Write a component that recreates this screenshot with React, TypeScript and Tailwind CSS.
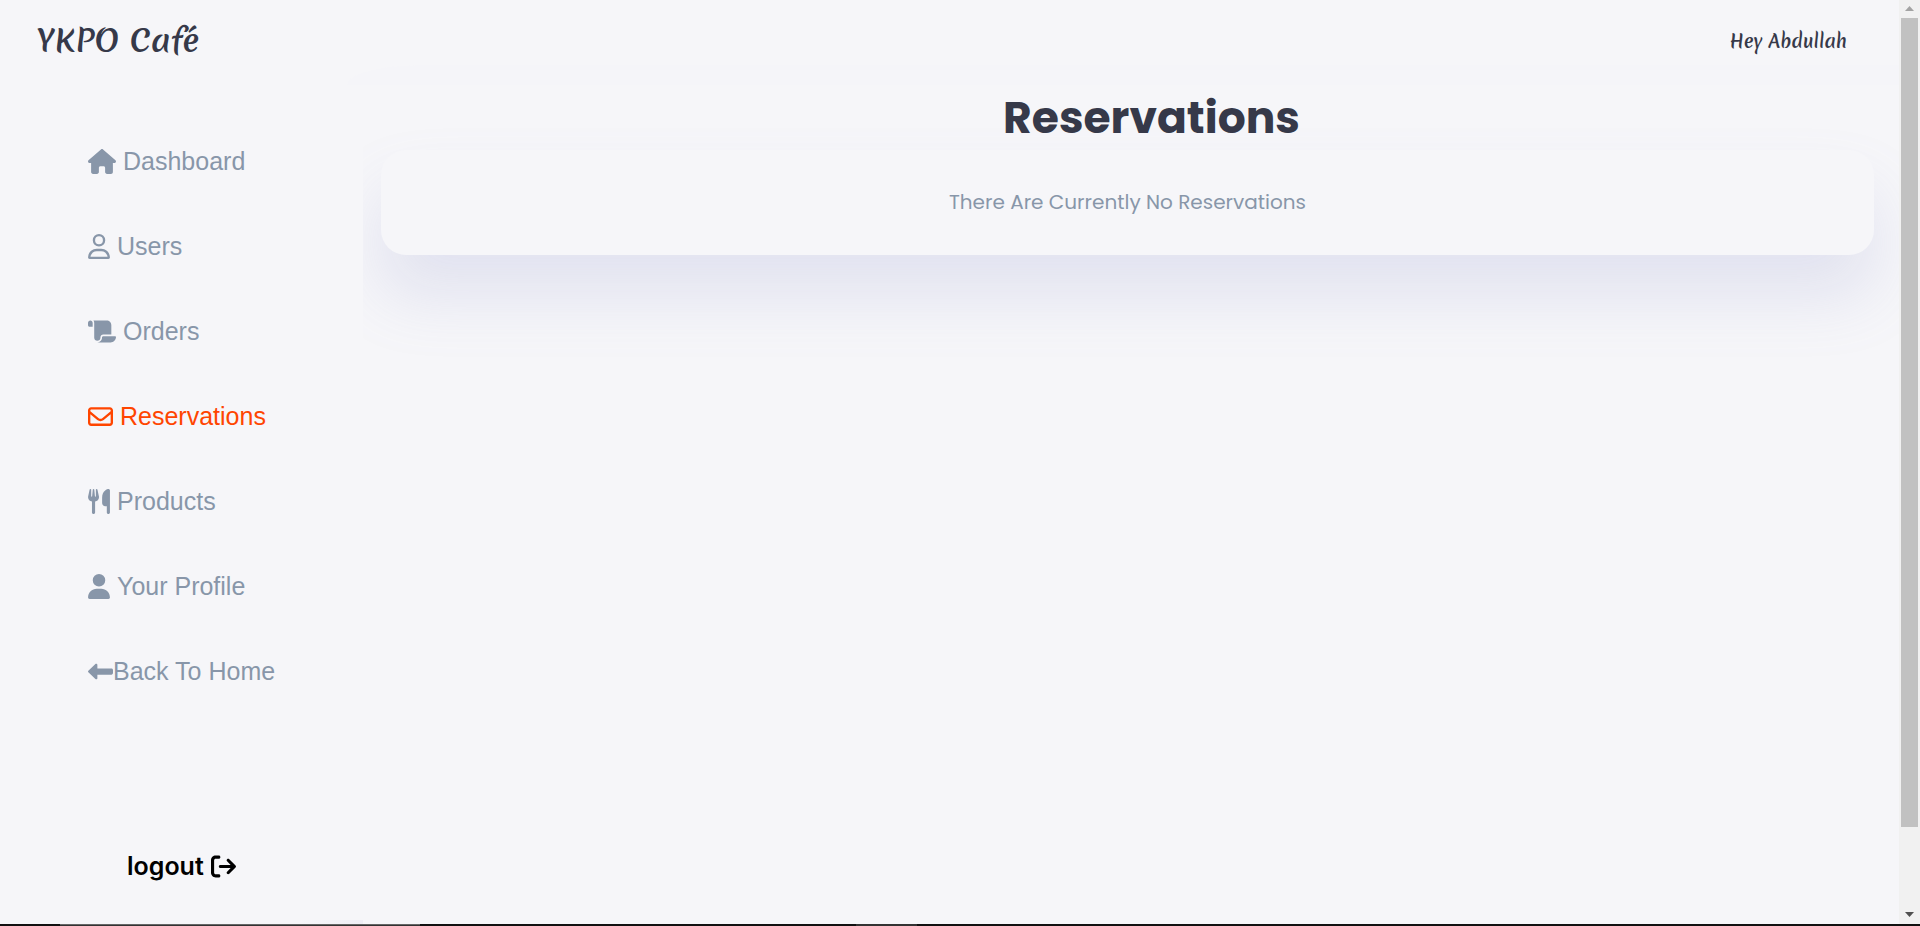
import type { ComponentType } from "react";
import {
  FaHouse,
  FaRegUser,
  FaScroll,
  FaRegEnvelope,
  FaUtensils,
  FaUser,
  FaLeftLong,
  FaArrowRightFromBracket,
} from "react-icons/fa6";

type Item = {
  label: string;
  icon: ComponentType<{ className?: string }>;
  size: string;
  active?: boolean;
  tight?: boolean;
};

const items: Item[] = [
  { label: "Dashboard", icon: FaHouse, size: "w-[28px]" },
  { label: "Users", icon: FaRegUser, size: "w-[22px]" },
  { label: "Orders", icon: FaScroll, size: "w-[28px]" },
  { label: "Reservations", icon: FaRegEnvelope, size: "w-[25px]", active: true },
  { label: "Products", icon: FaUtensils, size: "w-[22px]" },
  { label: "Your Profile", icon: FaUser, size: "w-[22px]" },
  { label: "Back To Home", icon: FaLeftLong, size: "w-[25px]", tight: true },
];

function Header() {
  return (
    <header className="flex shrink-0 flex-col font-['Merienda','Lato',sans-serif] text-[#363949]">
      <div className="flex items-center justify-between pt-[17px] pr-[52px] pl-[37px] leading-[48px]">
        <a href="#" className="text-[31px] font-semibold">
          YKPO Café
        </a>
        <span className="text-[18px] font-semibold">Hey Abdullah</span>
      </div>
      <div className="ml-[347px] h-5 rounded-tl-[80px_20px] bg-[#f5f5f9]" />
    </header>
  );
}

function Sidebar() {
  return (
    <aside className="relative z-10 flex w-[363px] shrink-0 flex-col bg-[#f6f6f9] pt-[62px] font-['Liberation_Sans',Arial,sans-serif]">
      <nav className="flex flex-col gap-[57px] pl-[88px] text-[25px] leading-[28px]">
        {items.map(({ label, icon: Icon, size, active, tight }) => (
          <a
            key={label}
            href="#"
            className={`flex items-center ${tight ? "" : "gap-[7px]"} ${active ? "text-[#ff4500]" : "text-[#8896a9]"}`}
          >
            <Icon className={`h-[25px] ${size}`} />
            {label}
          </a>
        ))}
      </nav>
      <button
        type="button"
        className="mt-auto mb-10 flex items-center gap-[7px] self-start pl-[127px] font-['Inter',sans-serif] text-[25px] leading-[28px] font-semibold text-black"
      >
        logout
        <FaArrowRightFromBracket className="size-[25px]" />
      </button>
      <div className="h-1 w-16 self-end bg-linear-to-r from-[#f6f6f9] to-[#eeeef5]" />
    </aside>
  );
}

function Scrollbar() {
  return (
    <div aria-hidden="true" className="flex w-[21px] shrink-0 flex-col items-center justify-between bg-[#f1f1f1]">
      <svg viewBox="0 0 17 18" className="h-[18px] w-[17px] fill-[#a3a3a3]">
        <path d="M4 11h9L8.500 6z" />
      </svg>
      <div className="mb-[79px] w-[17px] flex-1 bg-[#c1c1c1]" />
      <svg viewBox="0 0 17 18" className="h-[18px] w-[17px] fill-[#505050]">
        <path d="M4 6h9l-4.500 5z" />
      </svg>
    </div>
  );
}

export default function App() {
  return (
    <div className="flex h-screen flex-col overflow-hidden bg-[#f6f6f9]">
      <div className="flex min-h-0 flex-1">
        <div className="flex min-w-0 flex-1 flex-col">
          <Header />
          <div className="flex min-h-0 flex-1">
            <Sidebar />
            <main className="min-w-0 flex-1 overflow-hidden pr-[25px] pl-[18px] text-center font-['Poppins','Inter',sans-serif]">
              <h1 className="pt-0.5 pb-0.5 pl-12 text-[44px] leading-[61px] font-bold text-[#363949]">Reservations</h1>
              <section className="rounded-[25px] bg-[#f6f6f9] px-6 py-[37px] text-[20px] leading-[31px] text-[#8896a9] shadow-[0_40px_64px_rgba(132,139,200,0.18)]">
                There Are Currently No Reservations
              </section>
            </main>
          </div>
        </div>
        <Scrollbar />
      </div>
      <div className="flex h-[2px] shrink-0 bg-[#111111]">
        <div className="ml-[60px] w-[360px] border-t border-[#666666] bg-[#333333]" />
        <div className="ml-[436px] w-[61px] bg-[#333333]" />
      </div>
    </div>
  );
}
